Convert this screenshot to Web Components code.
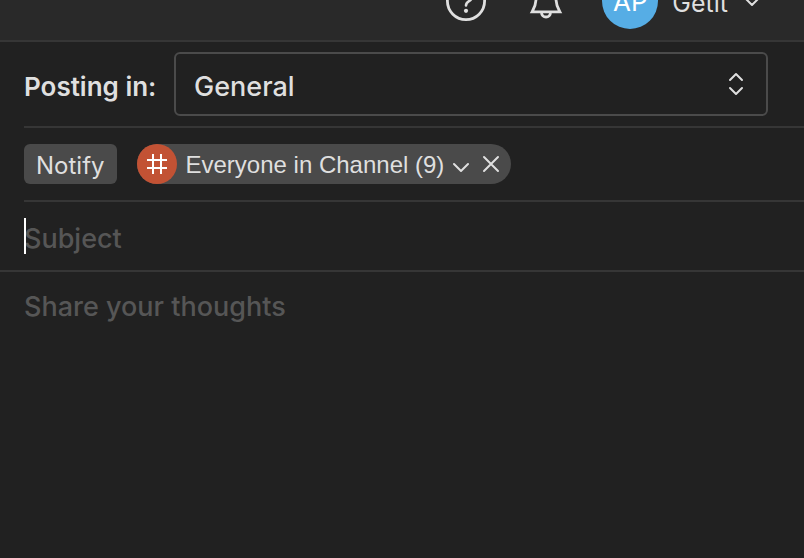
<!DOCTYPE html>
<html lang="en">
<head>
<meta charset="utf-8">
<meta name="viewport" content="width=device-width, initial-scale=1">
<title>New thread</title>
<style>
  html, body { margin: 0; min-height: 100%; background: #212121; }
  body { color: #dfdfdf; font-family: Inter, "Liberation Sans", sans-serif; --line: #363636; --chip: #4a4a4a; --hint: #565656; }
</style>
</head>
<body>
<thread-page></thread-page>
<script>
function define(name, html) {
  const template = document.createElement("template");
  template.innerHTML = `<style>
    *, :host { box-sizing: border-box; }
    button, input, textarea, select { font: inherit; color: inherit; background: none; border: 0; margin: 0; padding: 0; outline: 0; }
    button { display: flex; align-items: center; cursor: pointer; }
    svg { display: block; flex: none; fill: none; stroke: currentColor; stroke-width: 2; stroke-linecap: round; stroke-linejoin: round; }
  </style>` + html;
  customElements.define(name, class extends HTMLElement {
    constructor() {
      super();
      this.attachShadow({ mode: "open" }).append(template.content.cloneNode(true));
    }
  });
}

define("user-avatar", `
  <style>
    :host { display: grid; place-items: center; flex: none; width: 56px; height: 56px; padding-top: 2px; border-radius: 50%; background: #56ade5; color: #fff; font-size: 26px; line-height: 28px; }
  </style>
  <slot></slot>`);

define("top-bar", `
  <style>
    :host { display: block; background: #292929; border-bottom: 2px solid var(--line); }
    header { display: flex; justify-content: flex-end; align-items: flex-end; height: 40px; padding: 0 44px 11px 0; overflow: hidden; }
    nav { display: flex; align-items: center; gap: 40px; }
    .account { gap: 14px; margin-left: -4px; font-size: 25px; line-height: 28px; }
    .account span { padding-top: 4px; }
    .account svg { margin-left: 2px; }
  </style>
  <header><nav>
    <button class="help" aria-label="Help"><svg width="40" height="40" viewBox="0 0 40 40"><circle cx="20" cy="20" r="18.6" stroke-width="2.8"/><path d="M14 15a6 6 0 1 1 9 5.2c-2 1.200-3 2-3 4.300" stroke-width="2.6"/><circle cx="20" cy="29.800" r="2.100" fill="currentColor" stroke="none"/></svg></button>
    <button class="bell" aria-label="Notifications"><svg width="40" height="40" viewBox="0 0 40 40"><path d="M20 3a10 10 0 0 0-10 10v5c0 5-1 8-3.800 12.800h27.600C31 26 30 23 30 18v-5a10 10 0 0 0-10-10ZM15.500 31.500a4.500 4.500 0 0 0 9 0" stroke-linecap="butt" stroke-linejoin="miter" stroke-width="2.800"/></svg></button>
    <button class="account"><user-avatar>AP</user-avatar><span>Getit</span><svg width="16" height="12" viewBox="0 0 16 12"><path d="M2 4l6 6 6-6"/></svg></button>
  </nav></header>`);

define("channel-picker", `
  <style>
    :host { display: flex; align-items: center; gap: 16px; margin-left: 24px; padding: 10px 36px 10px 0; border-bottom: 2px solid var(--line); line-height: 34px; }
    label { width: 134px; padding-top: 6px; font-size: 26px; font-weight: 600; white-space: nowrap; }
    .box { display: grid; flex: 1; align-items: center; border: 2px solid #4b4b4b; border-radius: 6px; }
    select, svg { grid-area: 1 / 1; }
    select { appearance: none; width: 100%; height: 60px; padding: 6px 56px 0 18px; font-size: 27px; font-weight: 500; }
    option { background: #212121; }
    svg { justify-self: end; margin-right: 22px; pointer-events: none; }
  </style>
  <label for="channel">Posting in:</label>
  <div class="box">
    <select id="channel"><option>General</option></select>
    <svg width="16" height="24" viewBox="0 0 16 24"><path d="M2 8l6-6 6 6M2 16l6 6 6-6"/></svg>
  </div>`);

define("recipient-chip", `
  <style>
    :host { display: flex; align-items: center; height: 40px; padding-right: 11px; border-radius: 20px; background: var(--chip); font: 24px/28px "Liberation Sans", Arial, sans-serif; }
    .badge { display: grid; place-items: center; width: 40px; height: 40px; border-radius: 50%; background: #c25234; color: #fff; }
    .who { gap: 9px; margin: 0 13px 0 9px; white-space: nowrap; }
    .who span { padding-top: 2px; }
    .who svg { margin-top: 8px; }
  </style>
  <span class="badge"><svg width="24" height="24" viewBox="0 0 24 24" style="stroke-linecap:butt"><path d="M8 2v20M16 2v20M2 8h20M2 16h20"/></svg></span>
  <button class="who"><span><slot></slot></span><svg width="16" height="12" viewBox="0 0 16 12"><path d="M1 2l7 7 7-7"/></svg></button>
  <button aria-label="Remove"><svg width="18" height="18" viewBox="0 0 18 18"><path d="M2 2l14 14M16 2L2 16"/></svg></button>`);

define("notify-row", `
  <style>
    :host { display: flex; align-items: center; gap: 20px; margin-left: 24px; padding: 16px 0; border-bottom: 2px solid var(--line); }
    .notify { height: 40px; padding: 4px 12px 0; border-radius: 6px; background: var(--chip); font-size: 24px; line-height: 28px; }
  </style>
  <button class="notify">Notify</button>
  <recipient-chip>Everyone in Channel (9)</recipient-chip>`);

define("subject-field", `
  <style>
    :host { display: block; position: relative; padding: 16px 24px; border-bottom: 2px solid var(--line); }
    input { display: block; width: 100%; height: 36px; padding-top: 4px; font-size: 27px; font-weight: 500; line-height: 32px; }
    input::placeholder { color: var(--hint); opacity: 1; }
    .caret { position: absolute; left: 24px; top: 16px; width: 2px; height: 36px; background: #fff; }
  </style>
  <input type="text" aria-label="Subject" placeholder="Subject">
  <span class="caret"></span>`);

define("message-field", `
  <style>
    :host { display: flex; flex: 1; padding: 18px 24px; }
    textarea { flex: 1; resize: none; font-size: 27px; font-weight: 500; line-height: 34px; }
    textarea::placeholder { color: var(--hint); opacity: 1; }
  </style>
  <textarea aria-label="Message" placeholder="Share your thoughts"></textarea>`);

define("thread-page", `
  <style>
    :host { display: flex; flex-direction: column; min-height: 100vh; }
  </style>
  <top-bar></top-bar>
  <channel-picker></channel-picker>
  <notify-row></notify-row>
  <subject-field></subject-field>
  <message-field></message-field>`);
</script>
</body>
</html>
